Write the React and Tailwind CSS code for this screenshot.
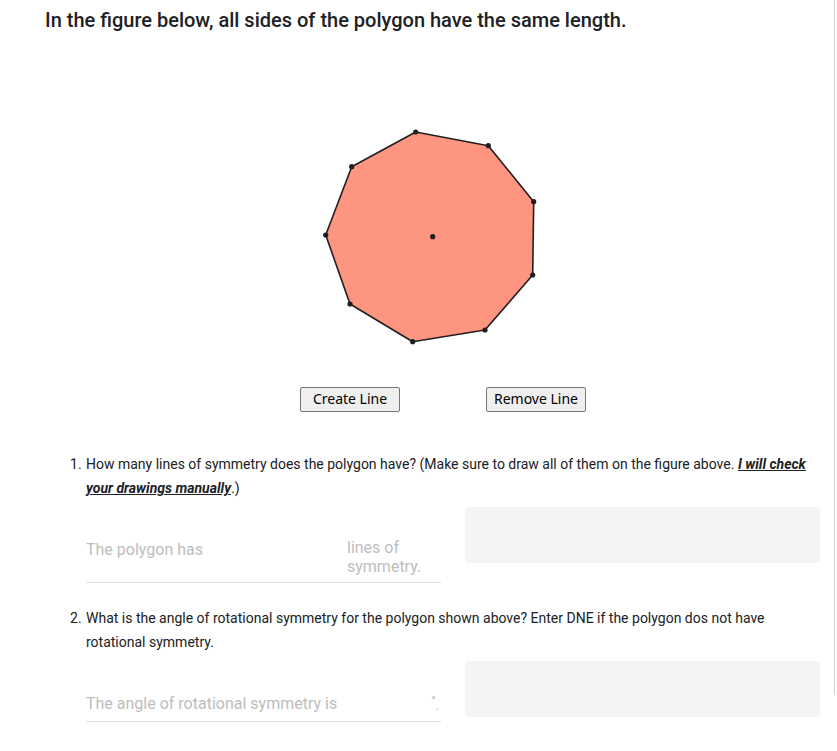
import React from 'react';

const pts = [
  [415.7, 132], [488.3, 145.7], [533.7, 201.7], [532.7, 275], [485, 330],
  [412.7, 341.7], [350, 304], [325.7, 235], [351.7, 166.7],
];

const Figure = () => (
  <svg width="837" height="320" viewBox="0 35 837 320" className="block">
    <polygon
      points={pts.map((p) => p.join(',')).join(' ')}
      fill="#fe9580"
      stroke="#1f1f1f"
      strokeWidth="1.6"
      strokeLinejoin="round"
    />
    {pts.map((p, i) => (
      <circle key={i} cx={p[0]} cy={p[1]} r="2.6" fill="#1f1f1f" />
    ))}
    <circle cx="432.7" cy="236.7" r="2.6" fill="#1f1f1f" />
  </svg>
);

const Question = ({ num, children }) => (
  <div className="flex pl-[70px] pr-[24px] text-[14px] leading-[24px] text-[#202124]">
    <span className="w-[16px] shrink-0">{num}.</span>
    <p>{children}</p>
  </div>
);

const AnswerBox = () => (
  <div className="w-[355px] h-[56px] rounded bg-[#f4f4f4]" />
);

const App = () => {
  return (
    <div className="relative w-[837px] h-[751px] overflow-hidden bg-white font-['Roboto',sans-serif]">
      <div className="absolute right-[2px] top-0 h-[695px] w-px bg-[#d4d4d4]" />

      <h1 className="pl-[45px] pt-[5px] text-[20px] leading-[30px] font-medium text-[#202124]">
        In the figure below, all sides of the polygon have the same length.
      </h1>

      <Figure />

      <div className="flex pt-[32px] font-['Noto_Sans',sans-serif] text-[14px] text-black">
        <button className="ml-[300px] w-[100px] h-[25px] pb-[2px] border border-[#767676] rounded-[2px] bg-[#efefef] leading-none">
          Create Line
        </button>
        <button className="ml-[86px] w-[100px] h-[25px] pb-[2px] border border-[#767676] rounded-[2px] bg-[#efefef] leading-none">
          Remove Line
        </button>
      </div>

      <div className="mt-[40px]">
        <Question num="1">
          How many lines of symmetry does the polygon have? (Make sure to draw all of them on the figure above.{' '}
          <span className="font-bold italic underline">I will check your drawings manually</span>.)
        </Question>
      </div>

      <div className="flex items-start pl-[86px] mt-[7px]">
        <div className="w-[355px] mt-[31px] flex items-start border-b border-[#e0e0e0] pb-[6px] text-[16px] leading-[19px] text-[#bdbdbd]">
          <span className="w-[261px] pt-[2px]">The polygon has</span>
          <span>lines of<br />symmetry.</span>
        </div>
        <div className="ml-[24px]">
          <AnswerBox />
        </div>
      </div>

      <div className="mt-[23px]">
        <Question num="2">
          What is the angle of rotational symmetry for the polygon shown above? Enter DNE if the polygon dos not have rotational symmetry.
        </Question>
      </div>

      <div className="flex items-start pl-[86px] mt-[7px]">
        <div className="w-[355px] mt-[33px] flex items-end justify-between border-b border-[#e0e0e0] pb-[8px] text-[16px] leading-[19px] text-[#bdbdbd]">
          <span>The angle of rotational symmetry is</span>
          <span className="flex items-start pr-[2px] text-[12px] leading-[14px]">
            <span className="-mt-[3px]">°</span>
            <span className="mt-[2px]">.</span>
          </span>
        </div>
        <div className="ml-[24px]">
          <AnswerBox />
        </div>
      </div>
    </div>
  );
};

export default App;
